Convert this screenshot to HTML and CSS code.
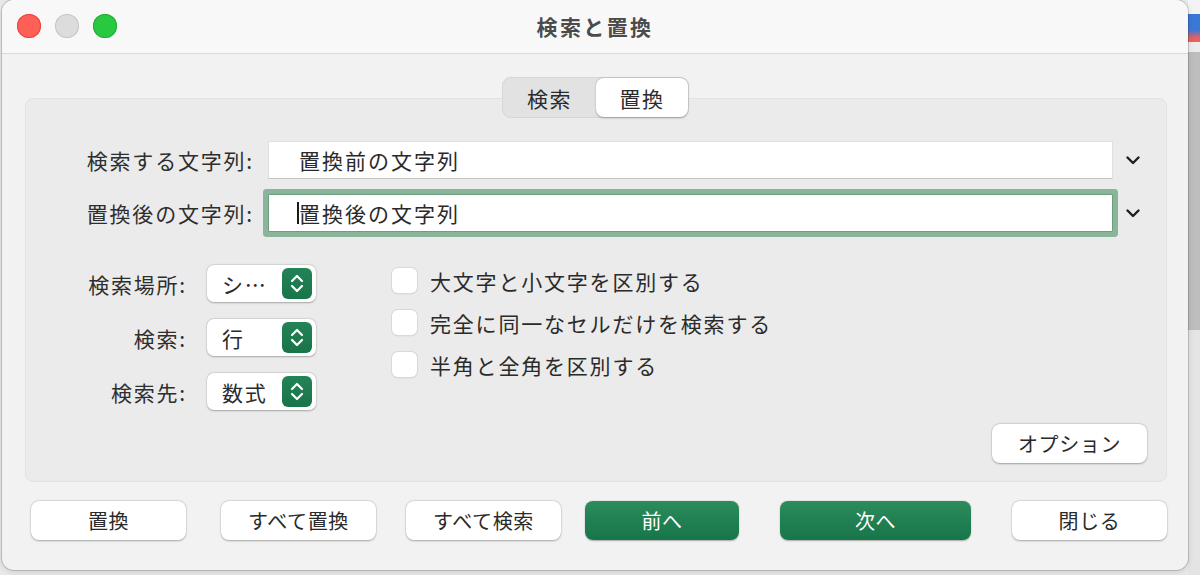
FILE: index.html
```html
<!DOCTYPE html>
<html lang="ja">
<head>
<meta charset="utf-8">
<title>検索と置換</title>
<link rel="stylesheet" href="styles.css">
</head>
<body>
<div class="window">
  <header class="titlebar">
    <div class="lights">
      <span class="light red"></span>
      <span class="light grey"></span>
      <span class="light green"></span>
    </div>
    <h1 class="title">検索と置換</h1>
    <div class="spacer"></div>
  </header>
  <main class="content">
    <div class="segmented">
      <span class="seg">検索</span>
      <span class="seg seg-on">置換</span>
    </div>
    <section class="group">
      <div class="field-row">
        <span class="lbl">検索する文字列:</span>
        <div class="field">置換前の文字列</div>
        <span class="chev"><svg width="14" height="9" viewBox="0 0 14 9"><path d="M1.5 1.5 L7 7 L12.5 1.5" fill="none" stroke="#1e1e1e" stroke-width="2.4" stroke-linecap="round" stroke-linejoin="round"/></svg></span>
      </div>
      <div class="field-row second">
        <span class="lbl">置換後の文字列:</span>
        <div class="field focus"><span class="caret"></span>置換後の文字列</div>
        <span class="chev"><svg width="14" height="9" viewBox="0 0 14 9"><path d="M1.5 1.5 L7 7 L12.5 1.5" fill="none" stroke="#1e1e1e" stroke-width="2.4" stroke-linecap="round" stroke-linejoin="round"/></svg></span>
      </div>
      <div class="lower">
        <div class="popups">
          <span class="plbl">検索場所:</span>
          <div class="popup"><span class="pval">シ…</span><span class="stepper"><svg width="30" height="31" viewBox="0 0 30 31"><path d="M10 13 L15 8 L20 13 M10 18 L15 23 L20 18" fill="none" stroke="#fff" stroke-width="2.2" stroke-linecap="round" stroke-linejoin="round"/></svg></span></div>
          <span class="plbl">検索:</span>
          <div class="popup"><span class="pval">行</span><span class="stepper"><svg width="30" height="31" viewBox="0 0 30 31"><path d="M10 13 L15 8 L20 13 M10 18 L15 23 L20 18" fill="none" stroke="#fff" stroke-width="2.2" stroke-linecap="round" stroke-linejoin="round"/></svg></span></div>
          <span class="plbl">検索先:</span>
          <div class="popup"><span class="pval">数式</span><span class="stepper"><svg width="30" height="31" viewBox="0 0 30 31"><path d="M10 13 L15 8 L20 13 M10 18 L15 23 L20 18" fill="none" stroke="#fff" stroke-width="2.2" stroke-linecap="round" stroke-linejoin="round"/></svg></span></div>
        </div>
        <div class="checks">
          <div class="check"><span class="box"></span><span>大文字と小文字を区別する</span></div>
          <div class="check"><span class="box"></span><span>完全に同一なセルだけを検索する</span></div>
          <div class="check"><span class="box"></span><span>半角と全角を区別する</span></div>
        </div>
      </div>
      <button class="btn opt">オプション</button>
    </section>
    <footer class="actions">
      <button class="btn a1">置換</button>
      <button class="btn a2">すべて置換</button>
      <button class="btn a3">すべて検索</button>
      <button class="btn primary a4">前へ</button>
      <button class="btn primary a5">次へ</button>
      <button class="btn a6">閉じる</button>
    </footer>
  </main>
</div>
</body>
</html>
```

FILE: styles.css
```css
* { box-sizing: border-box; }

html, body {
  margin: 0;
  width: 1200px;
  height: 575px;
  overflow: hidden;
}

body {
  font-family: "Noto Sans CJK JP", "Noto Sans", sans-serif;
  color: #2a2a2a;
  background:
    linear-gradient(to bottom, #f3f3f3 0 14px, #3a78d8 14px 30px, #e86060 38px 42px, #ececec 42px 52px, #bdbdbd 52px 330px, #e4e4e4 330px) right top / 12px 100% no-repeat,
    #e9e9e9;
}

.window {
  margin-left: 2px;
  width: 1186px;
  height: 570px;
  border-radius: 12px;
  background: #f2f2f2;
  box-shadow: 0 0 0 1px rgba(0, 0, 0, 0.16), 0 2px 6px rgba(0, 0, 0, 0.12);
  overflow: hidden;
}

/* title bar */
.titlebar {
  height: 54px;
  display: grid;
  grid-template-columns: 1fr auto 1fr;
  align-items: center;
  background: #f8f8f8;
  border-bottom: 1px solid #d9d9d9;
}

.lights {
  display: flex;
  gap: 14px;
  padding-left: 15px;
  padding-bottom: 1px;
}

.light {
  width: 24px;
  height: 24px;
  border-radius: 50%;
}

.light.red { background: #fe5f57; box-shadow: inset 0 0 0 1px #e5453e; }
.light.grey { background: #dcdcdc; box-shadow: inset 0 0 0 1px #c6c6c6; }
.light.green { background: #28c840; box-shadow: inset 0 0 0 1px #1fae33; }

.title {
  margin: 0;
  font-size: 21px;
  font-weight: 700;
  letter-spacing: 2.4px;
  color: #4b4b4b;
  padding-bottom: 2px;
}

/* content */
.content {
  padding: 23px 21px 0 23px;
}

.segmented {
  position: relative;
  z-index: 1;
  width: 187px;
  height: 41px;
  margin: 0 0 -20px 477px;
  display: flex;
  padding: 1px;
  border-radius: 9px;
  background: #e2e2e2;
  box-shadow: inset 0 0 0 1px #d6d6d6;
}

.seg {
  flex: 1;
  display: flex;
  align-items: center;
  justify-content: center;
  font-size: 21px;
  letter-spacing: 1.5px;
  color: #2b2b2b;
  border-radius: 8px;
}

.seg-on {
  flex: 0 0 92px;
  background: #ffffff;
  box-shadow: 0 0.5px 2px rgba(0, 0, 0, 0.3);
}

.group {
  height: 384px;
  display: flex;
  flex-direction: column;
  background: #ebebeb;
  border: 1px solid #e2e2e2;
  border-radius: 8px;
  padding-top: 42px;
}

.field-row {
  display: flex;
  align-items: center;
  height: 38px;
}

.field-row.second {
  margin-top: 15px;
}

.lbl {
  width: 228px;
  margin-right: 14px;
  text-align: right;
  font-size: 21px;
  letter-spacing: 1.8px;
  color: #2e2e2e;
  white-space: nowrap;
}

.field {
  width: 845px;
  height: 38px;
  display: flex;
  align-items: center;
  padding-left: 30px;
  background: #ffffff;
  border: 1px solid #e0e0e0;
  border-bottom-color: #c4c4c4;
  font-size: 21px;
  letter-spacing: 2px;
  color: #2a2a2a;
}

.field.focus {
  border: 1px solid #6c9f7e;
  border-radius: 1px;
  box-shadow: 0 0 0 5px #8bb59a;
}

.caret {
  width: 2px;
  height: 22px;
  background: #1a1a1a;
  margin-left: -2px;
  margin-right: 0;
}

.chev {
  width: 40px;
  display: flex;
  justify-content: center;
  align-items: center;
  padding-top: 1px;
}

/* lower section */
.lower {
  display: flex;
  margin-top: 33px;
}

.popups {
  display: grid;
  grid-template-columns: 161px 109px;
  column-gap: 20px;
  row-gap: 17px;
  align-items: center;
}

.plbl {
  text-align: right;
  font-size: 21px;
  letter-spacing: 1.8px;
  color: #2e2e2e;
  white-space: nowrap;
}

.popup {
  height: 37px;
  display: flex;
  align-items: center;
  justify-content: space-between;
  padding: 0 4px 0 15px;
  background: #ffffff;
  border-radius: 7px;
  box-shadow: 0 0.5px 2px rgba(0, 0, 0, 0.28), 0 0 0 0.5px rgba(0, 0, 0, 0.06);
}

.pval {
  font-size: 21px;
  letter-spacing: 1.8px;
  color: #2a2a2a;
  white-space: nowrap;
}

.stepper {
  width: 30px;
  height: 31px;
  display: flex;
  border-radius: 6px;
  background: linear-gradient(#238456, #187449);
}

.checks {
  margin-left: 76px;
  padding-top: 3px;
  display: flex;
  flex-direction: column;
  gap: 17px;
}

.check {
  display: flex;
  align-items: center;
  gap: 13px;
  height: 25px;
  font-size: 21px;
  letter-spacing: 1.8px;
  color: #2a2a2a;
  white-space: nowrap;
}

.box {
  width: 25px;
  height: 25px;
  border-radius: 6px;
  background: #ffffff;
  box-shadow: 0 0 0 1px #d9d9d9, 0 0.5px 1.5px rgba(0, 0, 0, 0.15);
}

/* buttons */
.btn {
  font-family: inherit;
  height: 39px;
  border: none;
  border-radius: 8px;
  background: #ffffff;
  box-shadow: 0 0.5px 2px rgba(0, 0, 0, 0.3), 0 0 0 0.5px rgba(0, 0, 0, 0.06);
  font-size: 20px;
  letter-spacing: 0.6px;
  color: #2a2a2a;
  padding: 0;
}

.opt {
  align-self: flex-end;
  margin-top: auto;
  margin-right: 19px;
  margin-bottom: 18px;
  width: 155px;
}

.actions {
  display: flex;
  margin-top: 19px;
}

.btn.primary {
  color: #ffffff;
  background: linear-gradient(#2b8c5c, #17754a);
  box-shadow: 0 0.5px 1.5px rgba(0, 0, 0, 0.3);
}

.a1 { width: 155px; margin-left: 6px; }
.a2 { width: 155px; margin-left: 35px; }
.a3 { width: 155px; margin-left: 30px; }
.a4 { width: 154px; margin-left: 24px; }
.a5 { width: 191px; margin-left: 41px; }
.a6 { width: 155px; margin-left: 41px; }
```
